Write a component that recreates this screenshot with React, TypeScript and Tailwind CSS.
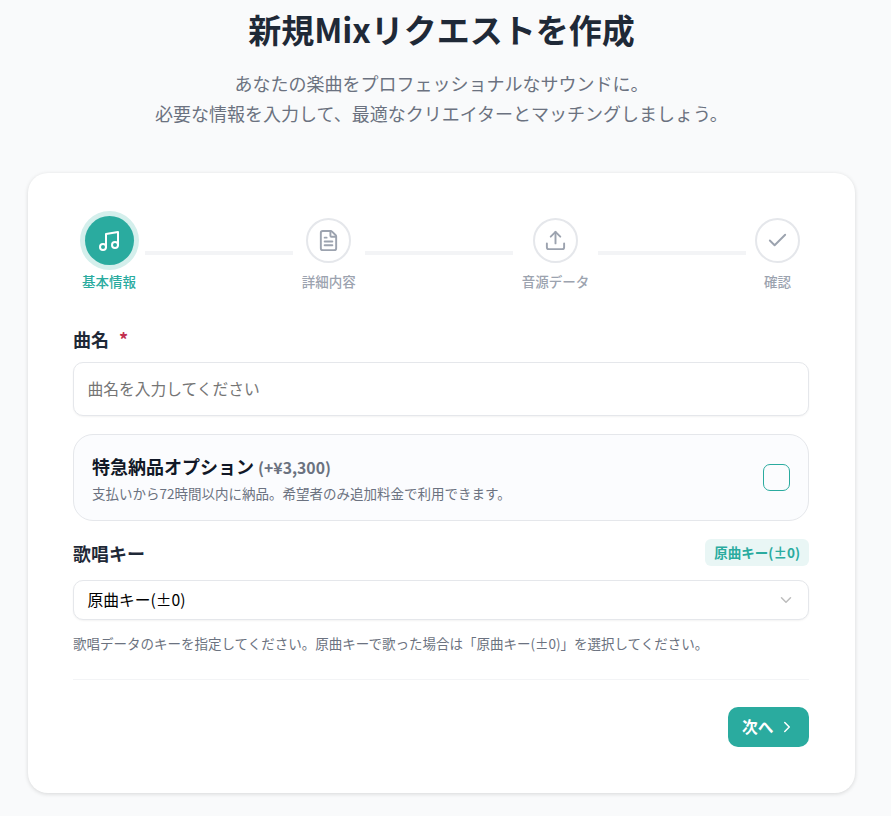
import { ChevronDown, ChevronRight, Check, FileText, Music, Upload } from "lucide-react";

const steps = [
  { label: "基本情報", icon: Music, active: true },
  { label: "詳細内容", icon: FileText },
  { label: "音源データ", icon: Upload },
  { label: "確認", icon: Check },
];

function Stepper() {
  return (
    <div className="flex items-start">
      {steps.map((step, i) => {
        const Icon = step.icon;
        return (
          <div key={step.label} className="contents">
            <div className="flex min-w-[63px] flex-col items-center px-[9px]">
              <div className="flex h-[49px] items-center justify-center">
                {step.active ? (
                  <div className="flex h-[49px] w-[49px] items-center justify-center rounded-full bg-[#2aab9f] shadow-[0_0_0_5px_#d4efec]">
                    <Icon size={24} strokeWidth={2} className="text-white" />
                  </div>
                ) : (
                  <div className="flex h-[45px] w-[45px] items-center justify-center rounded-full border-2 border-[#e5e7eb] bg-white">
                    <Icon size={23} strokeWidth={2} className="text-[#9ca3af]" />
                  </div>
                )}
              </div>
              <span
                className={`mt-[6px] whitespace-nowrap text-[13.5px] leading-[20px] font-medium ${
                  step.active ? "text-[#2aab9f]" : "text-[#9ca3af]"
                }`}
              >
                {step.label}
              </span>
            </div>
            {i < steps.length - 1 && (
              <div className="mt-[35px] h-1 flex-1 bg-[#f3f4f6]" />
            )}
          </div>
        );
      })}
    </div>
  );
}

export default function App() {
  return (
    <div className="min-h-[816px] overflow-hidden bg-[#f9fafb] font-['Noto_Sans_CJK_JP','Noto_Sans',sans-serif] text-[#1f2937]">
      <div className="pr-[36px] pl-[28px]">
        <div className="text-center">
          <h1 className="mt-[7px] text-[33px] leading-[44px] font-bold text-[#1f2937]">
            新規Mixリクエストを作成
          </h1>
          <p className="mt-[17px] text-[18px] leading-[30px] text-[#6b7280]">
            あなたの楽曲をプロフェッショナルなサウンドに。
            <br />
            必要な情報を入力して、最適なクリエイターとマッチングしましょう。
          </p>
        </div>

        <div className="mt-[45px] h-[620px] rounded-[20px] bg-white pt-[43px] pr-[46px] pl-[45px] shadow-[0_1px_4px_rgba(0,0,0,0.14)]">
          <Stepper />

          <div className="mt-[35px]">
            <label className="flex items-center text-[18px] leading-[26px] font-bold text-[#1f2937]">
              曲名<span className="ml-[10px] text-[#c22f4f]">*</span>
            </label>
            <input
              placeholder="曲名を入力してください"
              className="mt-[10px] block h-[54px] w-full rounded-[10px] border border-[#e5e7eb] bg-white pr-[14px] pb-[2px] pl-[13.5px] text-[15.75px] text-[#1f2937] shadow-[0_1px_2px_rgba(0,0,0,0.05)] placeholder:text-[#757575]"
            />
          </div>

          <div className="mt-[18px] flex h-[87px] items-center justify-between rounded-[20px] border border-[#e5e7eb] bg-[#fbfcfe] pr-[18px] pl-[18px]">
            <div>
              <p className="text-[18px] leading-[26px] font-bold text-[#111827]">
                特急納品オプション <span className="text-[15.75px] font-semibold text-[#6b7280]">(+¥3,300)</span>
              </p>
              <p className="mt-[3px] text-[13.5px] leading-[18px] text-[#6b7280]">
                支払いから72時間以内に納品。希望者のみ追加料金で利用できます。
              </p>
            </div>
            <div className="h-[27px] w-[27px] rounded-[7px] border border-[#2aab9f]" />
          </div>

          <div className="mt-[18px] flex items-center justify-between">
            <span className="text-[18px] leading-[26px] font-bold text-[#1f2937]">歌唱キー</span>
            <span className="rounded-[6px] bg-[#e9f6f5] px-[9px] py-[3px] text-[13.5px] leading-[21px] font-bold text-[#2aab9f]">
              原曲キー(±0)
            </span>
          </div>

          <div className="mt-[14px] flex h-[40px] items-center justify-between rounded-[10px] border border-[#e5e7eb] bg-white pr-[13px] pl-[13.5px] shadow-[0_1px_2px_rgba(0,0,0,0.05)]">
            <span className="text-[15.75px] text-black">原曲キー(±0)</span>
            <ChevronDown size={18} className="text-[#bdbdbd]" />
          </div>

          <p className="mt-[13px] text-[13.5px] leading-[20px] text-[#6b7280]">
            歌唱データのキーを指定してください。原曲キーで歌った場合は「原曲キー(±0)」を選択してください。
          </p>

          <div className="mt-[26px] border-t border-[#f3f4f6]" />

          <div className="mt-[27px] flex justify-end">
            <button className="flex h-[40px] w-[81px] items-center gap-[4px] rounded-[10px] bg-[#2aab9f] pl-[14px] text-[15.75px] font-bold text-white">
              次へ
              <ChevronRight size={18} />
            </button>
          </div>
        </div>
      </div>
    </div>
  );
}
